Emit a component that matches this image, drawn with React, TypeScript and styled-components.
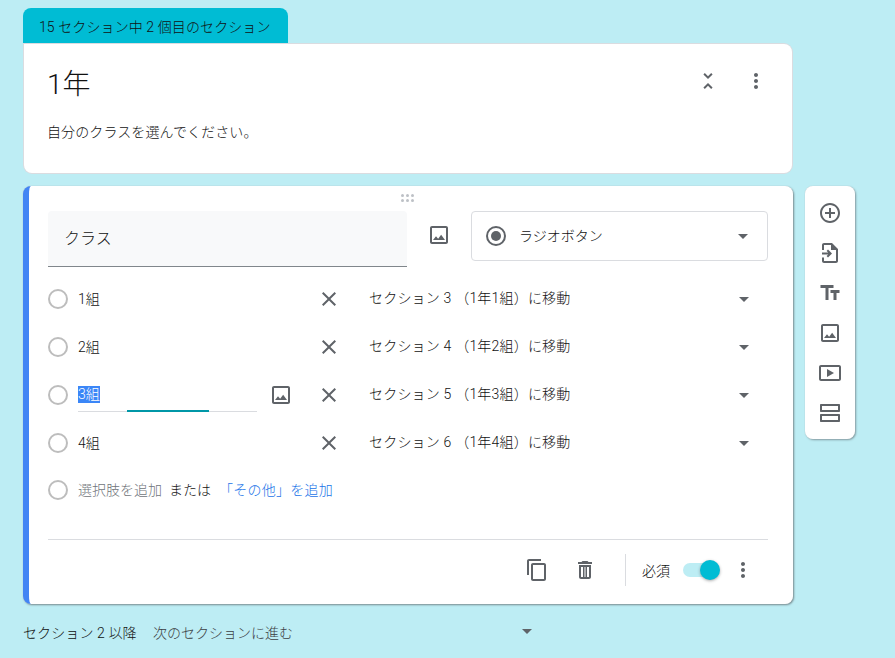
import React from "react";
import styled, { createGlobalStyle } from "styled-components";

const GlobalStyle = createGlobalStyle`
  html, body {
    margin: 0;
    padding: 0;
    height: 658px;
    overflow: hidden;
    background: #bdedf4;
    color: #111;
    font-family: Roboto, "Noto Sans CJK JP", sans-serif;
  }
`;

const Page = styled.div`
  width: 895px;
  height: 658px;
  padding: 8px 0 0 23px;
  box-sizing: border-box;
  overflow: hidden;
`;

const Tab = styled.div`
  width: 265px;
  height: 36px;
  box-sizing: border-box;
  padding: 0 0 0 16px;
  display: flex;
  align-items: center;
  background: #00bcd4;
  border-radius: 8px 8px 0 0;
  font-size: 14px;
  font-weight: 300;
  letter-spacing: 0.1px;
  white-space: nowrap;
`;

const Card = styled.section`
  background: #fff;
  border-radius: 8px;
  box-shadow: 0 0 0 1px #dadce0;
`;

const HeaderCard = styled(Card)`
  width: 768px;
  height: 129px;
  margin: 0 0 13px 1px;
  border-top-left-radius: 0;
  padding: 18px 24px 0 23px;
  box-sizing: border-box;
`;

const HeaderTop = styled.div`
  display: flex;
  align-items: flex-start;
  justify-content: space-between;
`;

const SectionTitle = styled.h1`
  margin: 0;
  font-size: 28px;
  line-height: 46px;
  font-weight: 300;
`;

const SectionNote = styled.p`
  margin: 14px 0 0;
  font-size: 14px;
  line-height: 20px;
  font-weight: 300;
  letter-spacing: 0.1px;
`;

const HeaderTools = styled.div`
  display: flex;
  gap: 24px;
  margin-top: 7px;
  color: #5f6368;
`;

const Workspace = styled.div`
  display: flex;
  align-items: flex-start;
  gap: 12px;
`;

const QuestionCard = styled(Card)`
  position: relative;
  width: 770px;
  height: 418px;
  flex: none;
  box-sizing: border-box;
  padding: 25px 25px 0 19px;
  border-left: 6px solid #4285f4;
  box-shadow: 0 0 1px #c8cccf, 1px 1px 2px rgba(60, 64, 67, 0.6);
`;

const DragHandle = styled.div`
  position: absolute;
  top: 8px;
  left: 372px;
  display: grid;
  grid-template-columns: repeat(3, 3px);
  gap: 2px;

  span {
    width: 3px;
    height: 3px;
    border-radius: 50%;
    background: #bdc1c6;
  }
`;

const QuestionRow = styled.div`
  display: flex;
  align-items: flex-start;
  height: 64px;
`;

const TitleInput = styled.div`
  width: 359px;
  height: 56px;
  flex: none;
  box-sizing: border-box;
  padding: 0 15px 3px 16px;
  display: flex;
  align-items: center;
  background: #f8f9fa;
  border-radius: 4px 4px 0 0;
  border-bottom: 1px solid #80868b;
  font-size: 16px;
  font-weight: 300;
`;

const TitleImage = styled.div`
  width: 64px;
  height: 48px;
  flex: none;
  display: flex;
  align-items: center;
  justify-content: center;
  color: #5f6368;
`;

const TypeSelect = styled.div`
  width: 297px;
  height: 50px;
  flex: none;
  box-sizing: border-box;
  padding: 0 19px 0 14px;
  display: flex;
  align-items: center;
  border: 1px solid #dadce0;
  border-radius: 4px;
  font-size: 14px;
  font-weight: 300;
  color: #5f6368;

  > span {
    flex: 1;
    margin: 0 0 3px 13px;
    color: #111;
  }
`;

const TypeDot = styled.div`
  width: 20px;
  height: 20px;
  box-sizing: border-box;
  border: 2px solid #5f6368;
  border-radius: 50%;
  display: flex;
  align-items: center;
  justify-content: center;

  &::after {
    content: "";
    width: 10px;
    height: 10px;
    border-radius: 50%;
    background: #5f6368;
  }
`;

const Caret = styled.div<{ $color?: string }>`
  width: 0;
  height: 0;
  border-left: 5px solid transparent;
  border-right: 5px solid transparent;
  border-top: 5px solid ${(p) => p.$color || "#5f6368"};
`;

const OptionRow = styled.div`
  height: 48px;
  display: flex;
  align-items: center;
`;

const RadioMark = styled.div`
  width: 20px;
  height: 20px;
  flex: none;
  box-sizing: border-box;
  border: 2px solid #bdbdbd;
  border-radius: 50%;
  margin-right: 10px;
`;

const OptionLabel = styled.div<{ $focused?: boolean }>`
  position: relative;
  width: 179px;
  height: 48px;
  flex: none;
  box-sizing: border-box;
  padding-bottom: 2px;
  display: flex;
  align-items: center;
  font-size: 14px;
  font-weight: 300;

  ${(p) =>
    p.$focused &&
    `
    &::before {
      content: "";
      position: absolute;
      left: 0;
      right: 0;
      top: 40px;
      height: 1px;
      background: #dadce0;
    }
    &::after {
      content: "";
      position: absolute;
      left: 49px;
      width: 82px;
      top: 39px;
      height: 2px;
      background: #0097a7;
    }
    `}
`;

const Selected = styled.span`
  background: #3b86f7;
  color: #fff;
  line-height: 17px;
`;

const IconSlot = styled.div`
  width: 48px;
  height: 48px;
  flex: none;
  display: flex;
  align-items: center;
  justify-content: center;
  color: #5f6368;
`;

const Destination = styled.div`
  flex: 1;
  margin-left: 16px;
  padding: 0 19px 4px 0;
  display: flex;
  align-items: center;
  justify-content: space-between;
  font-size: 14px;
  font-weight: 300;
  letter-spacing: 0.2px;
  white-space: nowrap;

  > div {
    margin-top: 4px;
  }
`;

const AddRow = styled(OptionRow)`
  font-size: 14px;
  font-weight: 300;
  margin-top: -1px;

  > span {
    margin-bottom: 2px;
  }
`;

const AddHint = styled.span`
  color: #70757a;
`;

const AddOr = styled.span`
  margin: 0 8px 0 7px;
`;

const AddLink = styled.span`
  color: #1a73e8;
  letter-spacing: 0.25px;
`;

const CardFooter = styled.div`
  margin-top: 25px;
  border-top: 1px solid #dadce0;
  height: 60px;
  display: flex;
  align-items: center;
  justify-content: flex-end;
  color: #5f6368;
`;

const FooterDivider = styled.div`
  width: 1px;
  height: 32px;
  background: #dadce0;
  margin: 0 16px 0 16px;
`;

const RequiredLabel = styled.span`
  font-size: 14px;
  font-weight: 300;
  color: #111;
`;

const Toggle = styled.div`
  position: relative;
  width: 36px;
  height: 14px;
  margin-left: 13px;
  border-radius: 7px;
  background: #bdedf4;

  &::after {
    content: "";
    position: absolute;
    right: -1px;
    top: -3px;
    width: 20px;
    height: 20px;
    border-radius: 50%;
    background: #00bcd4;
    box-shadow: 0 1px 3px rgba(60, 64, 67, 0.45);
  }
`;

const FooterMore = styled.div`
  width: 24px;
  height: 24px;
  margin: 0 13px 0 12px;
`;

const Toolbox = styled.aside`
  width: 50px;
  height: 253px;
  flex: none;
  box-sizing: border-box;
  padding: 15px 0 0;
  display: flex;
  flex-direction: column;
  align-items: center;
  gap: 16px;
  background: #fff;
  border-radius: 8px;
  color: #5f6368;
  box-shadow: 0 0 1px #c8cccf, 1px 1px 2px rgba(60, 64, 67, 0.5);

  svg {
    flex: none;
  }
`;

const SectionNav = styled.div`
  width: 770px;
  height: 55px;
  display: flex;
  align-items: center;
  font-size: 14px;
  font-weight: 300;
`;

const NavLabel = styled.span`
  width: 130px;
  letter-spacing: 0.1px;
`;

const NavTarget = styled.span`
  width: 369px;
  color: #3c4043;
`;

const Icon = ({ d, size = 24 }: { d: string; size?: number }) => (
  <svg width={size} height={size} viewBox="0 0 24 24" fill="currentColor">
    <path d={d} />
  </svg>
);

const paths = {
  collapse:
    "M7.41 18.59L8.83 20 12 16.83 15.17 20l1.41-1.41L12 14l-4.59 4.59zm9.18-13.18L15.17 4 12 7.17 8.83 4 7.41 5.41 12 10l4.59-4.59z",
  more:
    "M12 8c1.1 0 2-.9 2-2s-.9-2-2-2-2 .9-2 2 .9 2 2 2zm0 2c-1.1 0-2 .9-2 2s.9 2 2 2 2-.9 2-2-.9-2-2-2zm0 6c-1.1 0-2 .9-2 2s.9 2 2 2 2-.9 2-2-.9-2-2-2z",
  image:
    "M19 5v14H5V5h14m0-2H5c-1.1 0-2 .9-2 2v14c0 1.1.9 2 2 2h14c1.1 0 2-.9 2-2V5c0-1.1-.9-2-2-2zm-4.86 8.86l-3 3.87L9 13.14 6 17h12l-3.86-5.14z",
  close:
    "M19 6.41L17.59 5 12 10.59 6.41 5 5 6.41 10.59 12 5 17.59 6.41 19 12 13.41 17.59 19 19 17.59 13.41 12z",
  copy:
    "M16 1H4c-1.1 0-2 .9-2 2v14h2V3h12V1zm3 4H8c-1.1 0-2 .9-2 2v14c0 1.1.9 2 2 2h11c1.1 0 2-.9 2-2V7c0-1.1-.9-2-2-2zm0 16H8V7h11v14z",
  trash:
    "M16 9v10H8V9h8m-1.5-6h-5l-1 1H5v2h14V4h-3.5l-1-1zM18 7H6v12c0 1.1.9 2 2 2h8c1.1 0 2-.9 2-2V7zM10 9h1.5v10H10zm2.5 0H14v10h-1.5z",
  add:
    "M13 7h-2v4H7v2h4v4h2v-4h4v-2h-4V7zm-1-5C6.48 2 2 6.48 2 12s4.48 10 10 10 10-4.48 10-10S17.52 2 12 2zm0 18c-4.41 0-8-3.59-8-8s3.59-8 8-8 8 3.59 8 8-3.59 8-8 8z",
  importFile:
    "M6 2h8l6 6v12c0 1.1-.9 2-2 2H6c-1.1 0-2-.9-2-2v-3.5h2V20h12V9h-5V4H6v5H4V4c0-1.1.9-2 2-2zM4 11.5h6.2L8.6 9.9 10 8.5l4 4-4 4-1.4-1.4 1.6-1.6H4z",
  text: "M2.5 4v3h5v12h3V7h5V4h-13zm19 5h-9v3h3v7h3v-7h3V9z",
  video:
    "M21 4H3c-1.1 0-2 .9-2 2v12c0 1.1.9 2 2 2h18c1.1 0 2-.9 2-2V6c0-1.1-.9-2-2-2zm0 14H3V6h18v12zM9 8v8l7-4z",
  section:
    "M3 3h18c.6 0 1 .4 1 1v6c0 .6-.4 1-1 1H3c-.6 0-1-.4-1-1V4c0-.6.4-1 1-1zm1 2v4h16V5H4zm-1 8h18c.6 0 1 .4 1 1v6c0 .6-.4 1-1 1H3c-.6 0-1-.4-1-1v-6c0-.6.4-1 1-1zm1 2v4h16v-4H4z",
};

const options = [
  { label: "1組", target: "セクション 3 （1年1組）に移動" },
  { label: "2組", target: "セクション 4 （1年2組）に移動" },
  { label: "3組", target: "セクション 5 （1年3組）に移動", focused: true },
  { label: "4組", target: "セクション 6 （1年4組）に移動" },
];

const tools = [
  paths.add,
  paths.importFile,
  paths.text,
  paths.image,
  paths.video,
  paths.section,
];

export default function App() {
  return (
    <Page>
      <GlobalStyle />
      <Tab>15 セクション中 2 個目のセクション</Tab>
      <HeaderCard>
        <HeaderTop>
          <SectionTitle>1年</SectionTitle>
          <HeaderTools>
            <Icon d={paths.collapse} />
            <Icon d={paths.more} />
          </HeaderTools>
        </HeaderTop>
        <SectionNote>自分のクラスを選んでください。</SectionNote>
      </HeaderCard>

      <Workspace>
        <QuestionCard>
          <DragHandle>
            {Array.from({ length: 6 }).map((_, i) => (
              <span key={i} />
            ))}
          </DragHandle>
          <QuestionRow>
            <TitleInput>クラス</TitleInput>
            <TitleImage>
              <Icon d={paths.image} />
            </TitleImage>
            <TypeSelect>
              <TypeDot />
              <span>ラジオボタン</span>
              <Caret />
            </TypeSelect>
          </QuestionRow>

          {options.map((o) => (
            <OptionRow key={o.label}>
              <RadioMark />
              <OptionLabel $focused={o.focused}>
                {o.focused ? <Selected>{o.label}</Selected> : o.label}
              </OptionLabel>
              <IconSlot>{o.focused && <Icon d={paths.image} />}</IconSlot>
              <IconSlot>
                <Icon d={paths.close} />
              </IconSlot>
              <Destination>
                {o.target}
                <Caret />
              </Destination>
            </OptionRow>
          ))}

          <AddRow>
            <RadioMark />
            <AddHint>選択肢を追加</AddHint>
            <AddOr>または</AddOr>
            <AddLink>「その他」を追加</AddLink>
          </AddRow>

          <CardFooter>
            <IconSlot>
              <Icon d={paths.copy} />
            </IconSlot>
            <IconSlot>
              <Icon d={paths.trash} />
            </IconSlot>
            <FooterDivider />
            <RequiredLabel>必須</RequiredLabel>
            <Toggle />
            <FooterMore>
              <Icon d={paths.more} />
            </FooterMore>
          </CardFooter>
        </QuestionCard>

        <Toolbox>
          {tools.map((d, i) => (
            <Icon key={i} d={d} />
          ))}
        </Toolbox>
      </Workspace>

      <SectionNav>
        <NavLabel>セクション 2 以降</NavLabel>
        <NavTarget>次のセクションに進む</NavTarget>
        <Caret />
      </SectionNav>
    </Page>
  );
}
